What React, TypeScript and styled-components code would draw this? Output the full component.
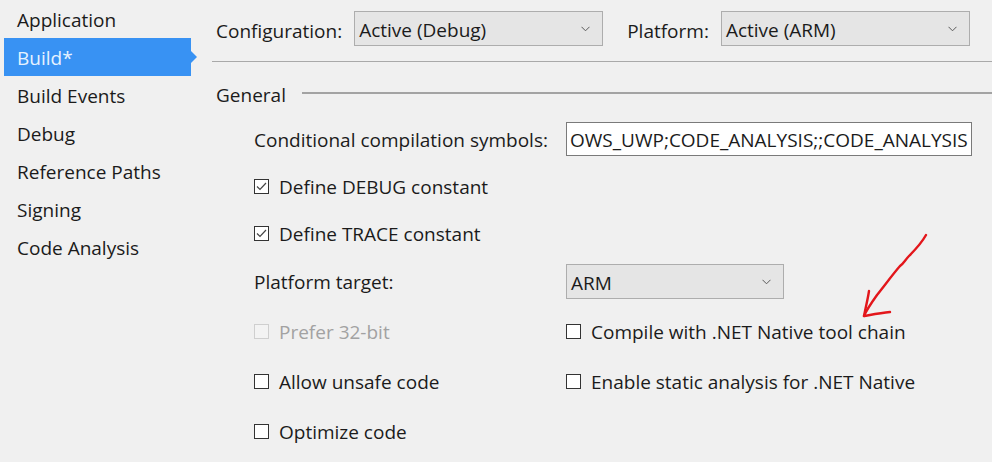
import React from "react";
import styled, { createGlobalStyle } from "styled-components";

const Global = createGlobalStyle`
  html, body { margin: 0; padding: 0; background: #f0f0f0; }
  body { font-family: "Open Sans", "Noto Sans", sans-serif; color: #1b1b1b; }
  * { box-sizing: border-box; }
`;

const Page = styled.div`
  position: relative;
  width: 992px;
  height: 462px;
  overflow: hidden;
  display: flex;
  background: #f0f0f0;
  font-size: 19px;
`;

const Sidebar = styled.nav`
  width: 212px;
  flex: none;
  display: flex;
  flex-direction: column;
  padding-left: 4px;
`;

const NavItem = styled.div<{ $active?: boolean }>`
  position: relative;
  width: 187px;
  height: 38px;
  display: flex;
  align-items: center;
  padding: 3px 0 0 13px;
  line-height: 1;
  background: ${(p) => (p.$active ? "#3892f3" : "transparent")};
  color: ${(p) => (p.$active ? "#e6f2ff" : "#1b1b1b")};
  ${(p) =>
    p.$active &&
    `&::after {
      content: "";
      position: absolute;
      right: -6px;
      top: 50%;
      margin-top: -6px;
      border-top: 6px solid transparent;
      border-bottom: 6px solid transparent;
      border-left: 6px solid #3892f3;
    }`}
`;

const Main = styled.main`
  flex: 1;
  display: flex;
  flex-direction: column;
`;

const Header = styled.div`
  display: flex;
  align-items: center;
  padding: 11px 0 0 4px;
  height: 46px;
`;

const Label = styled.span<{ $disabled?: boolean }>`
  display: inline-block;
  white-space: nowrap;
  line-height: 1;
  padding-top: 2px;
  color: ${(p) => (p.$disabled ? "#a2a2a2" : "#1b1b1b")};
`;

const HeaderLabel = styled(Label)`
  margin-right: 12px;
  padding-top: 5px;
`;

const Select = styled.div<{ $w: number; $mr?: number }>`
  width: ${(p) => p.$w}px;
  height: 35px;
  flex: none;
  display: flex;
  align-items: center;
  justify-content: space-between;
  padding: 4px 12px 0 4px;
  background: #e5e5e5;
  border: 1px solid #adadad;
  margin-right: ${(p) => p.$mr ?? 0}px;
  line-height: 1;
  white-space: nowrap;
`;

const Chevron = () => (
  <svg width="9" height="6" viewBox="0 0 9 6" style={{ marginTop: -3 }}>
    <path d="M0.5 0.8 L4.5 4.8 L8.5 0.8" fill="none" stroke="#5a5a5a" strokeWidth="1" />
  </svg>
);

const Rule = styled.div`
  height: 2px;
  border-top: 1px solid #a9a9a9;
  margin-top: 15px;
`;

const SectionHead = styled.div`
  display: flex;
  align-items: center;
  gap: 16px;
  padding: 10px 0 0 4px;
  height: 52px;
`;

const SectionLine = styled.div`
  flex: 1;
  height: 2px;
  background: #a3a3a3;
  margin-top: -3px;
`;

const Form = styled.div`
  display: grid;
  grid-template-columns: 312px 1fr;
  grid-template-rows: 48px 47px 46px 50px 50px 50px 50px;
  padding-left: 42px;
  align-items: center;
`;

const Cell = styled.div<{ $span?: boolean }>`
  display: flex;
  align-items: center;
  ${(p) => (p.$span ? "grid-column: 1 / span 2;" : "")}
`;

const TextInput = styled.div`
  width: 406px;
  height: 34px;
  background: #fff;
  border: 1px solid #7a7a7a;
  display: flex;
  align-items: center;
  padding: 2px 0 0 3px;
  overflow: hidden;
  white-space: nowrap;
  line-height: 1;
`;

const Box = styled.span<{ $disabled?: boolean }>`
  width: 15px;
  height: 15px;
  flex: none;
  border: 1px solid ${(p) => (p.$disabled ? "#cfcfcf" : "#333")};
  background: ${(p) => (p.$disabled ? "#f3f3f3" : "#fff")};
  margin-right: 10px;
  display: flex;
  align-items: center;
  justify-content: center;
`;

const Check = ({ label, checked, disabled }: { label: string; checked?: boolean; disabled?: boolean }) => (
  <>
    <Box $disabled={disabled}>
      {checked && (
        <svg width="11" height="9" viewBox="0 0 11 9">
          <path d="M1 4.5 L4 7.5 L10 1" fill="none" stroke="#444" strokeWidth="1.2" />
        </svg>
      )}
    </Box>
    <Label $disabled={disabled}>{label}</Label>
  </>
);

const Arrow = styled.svg`
  position: absolute;
  left: 855px;
  top: 230px;
  pointer-events: none;
`;

export default function App() {
  return (
    <>
      <Global />
      <Page>
        <Sidebar>
          <NavItem>Application</NavItem>
          <NavItem $active>Build*</NavItem>
          <NavItem>Build Events</NavItem>
          <NavItem>Debug</NavItem>
          <NavItem>Reference Paths</NavItem>
          <NavItem>Signing</NavItem>
          <NavItem>Code Analysis</NavItem>
        </Sidebar>
        <Main>
          <Header>
            <HeaderLabel>Configuration:</HeaderLabel>
            <Select $w={249} $mr={24}>
              <span>Active (Debug)</span>
              <Chevron />
            </Select>
            <HeaderLabel>Platform:</HeaderLabel>
            <Select $w={249}>
              <span>Active (ARM)</span>
              <Chevron />
            </Select>
          </Header>
          <Rule />
          <SectionHead>
            <Label>General</Label>
            <SectionLine />
          </SectionHead>
          <Form>
            <Cell><Label>Conditional compilation symbols:</Label></Cell>
            <Cell><TextInput>OWS_UWP;CODE_ANALYSIS;;CODE_ANALYSIS</TextInput></Cell>
            <Cell $span><Check label="Define DEBUG constant" checked /></Cell>
            <Cell $span><Check label="Define TRACE constant" checked /></Cell>
            <Cell><Label>Platform target:</Label></Cell>
            <Cell>
              <Select $w={218}>
                <span>ARM</span>
                <Chevron />
              </Select>
            </Cell>
            <Cell><Check label="Prefer 32-bit" disabled /></Cell>
            <Cell><Check label="Compile with .NET Native tool chain" /></Cell>
            <Cell><Check label="Allow unsafe code" /></Cell>
            <Cell><Check label="Enable static analysis for .NET Native" /></Cell>
            <Cell $span><Check label="Optimize code" /></Cell>
          </Form>
        </Main>
        <Arrow width="80" height="95" viewBox="0 0 80 95">
          <path
            d="M71 5 C66 14 60 20 54 26 C50 30 49 33 45 36 C38 44 30 55 22 65 C17 72 12 79 9 86"
            fill="none"
            stroke="#e3161b"
            strokeWidth="2.4"
            strokeLinecap="round"
          />
          <path
            d="M14 61 C13 68 11 76 9 86 C15 85 25 83 35 82"
            fill="none"
            stroke="#e3161b"
            strokeWidth="2.4"
            strokeLinecap="round"
            strokeLinejoin="round"
          />
        </Arrow>
      </Page>
    </>
  );
}
